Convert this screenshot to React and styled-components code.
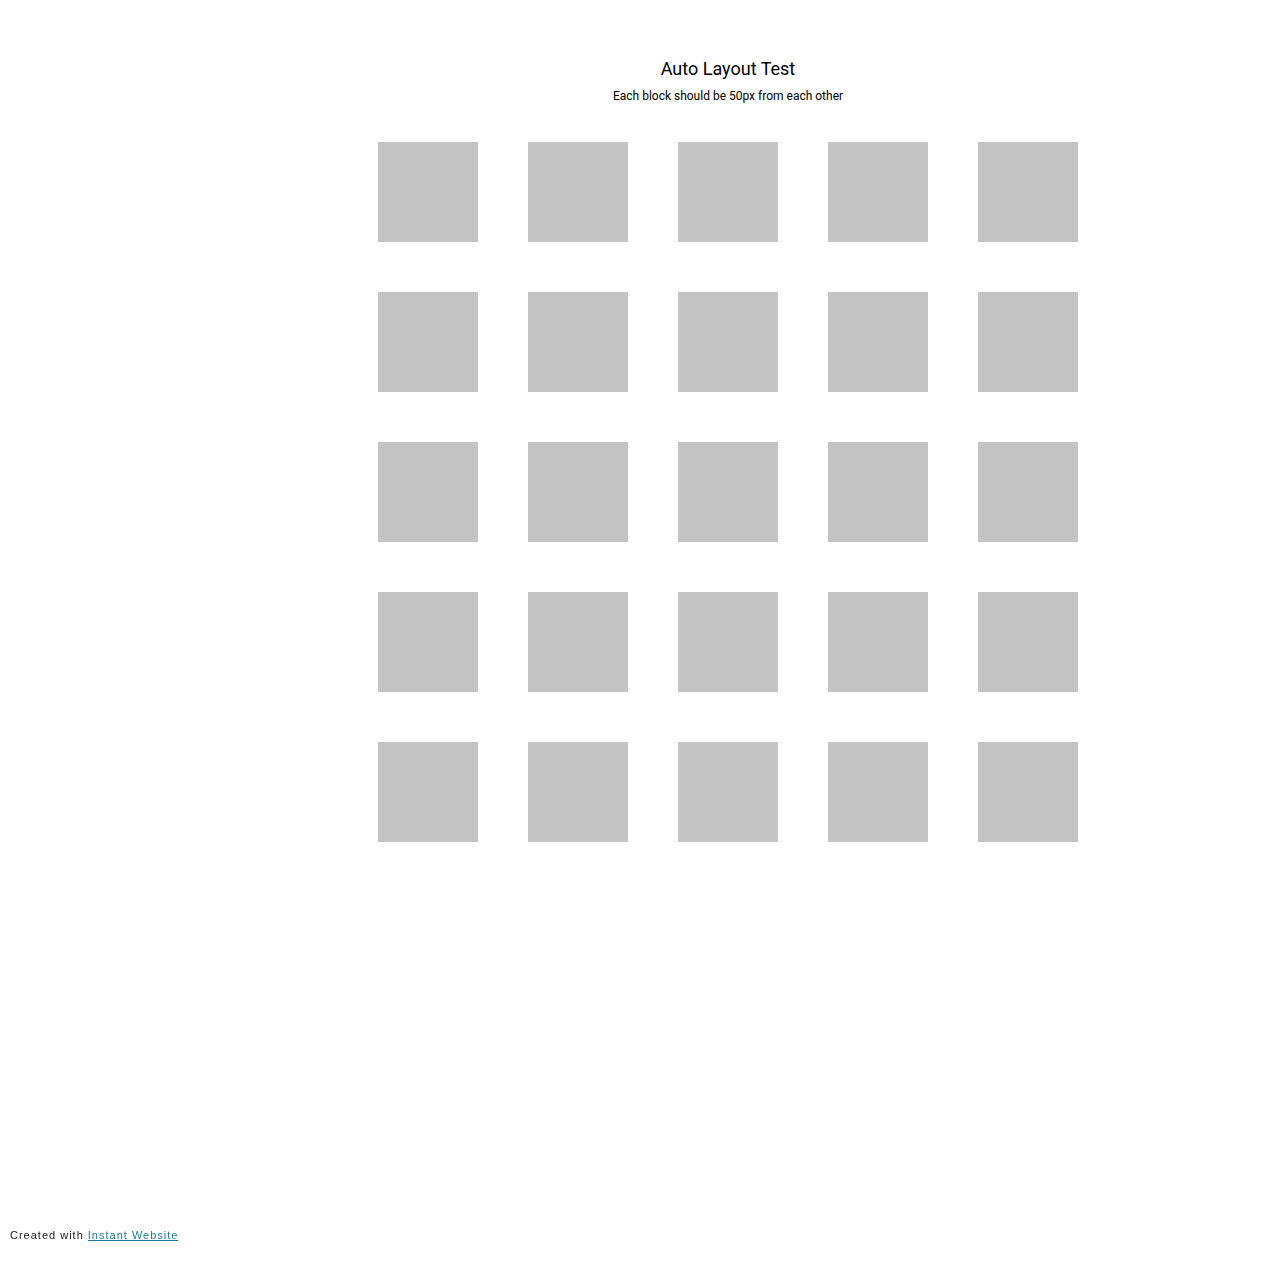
import React from "react";
import styled, { createGlobalStyle } from "styled-components";

const ROWS = 5;
const COLS = 5;

export default function App() {
  const blocks = Array.from({ length: ROWS * COLS }, (_, i) => i);
  return (
    <>
      <GlobalStyle />
      <Page>
        <Title>Auto Layout Test</Title>
        <Subtitle>Each block should be 50px from each other</Subtitle>
        <Grid>
          {blocks.map((i) => (
            <Block key={i} />
          ))}
        </Grid>
      </Page>
      <Credit>
        Created with <CreditLink href="#">Instant Website</CreditLink>
      </Credit>
    </>
  );
}

const GlobalStyle = createGlobalStyle`
  html {
    overflow-y: scroll;
  }
  body {
    margin: 0;
    background: #ffffff;
    font-family: Roboto, "Liberation Sans", sans-serif;
    color: #000000;
  }
`;

const Page = styled.main`
  width: 1456px;
  padding-top: 58px;
  display: flex;
  flex-direction: column;
  align-items: center;
`;

const Title = styled.h1`
  margin: 0;
  font-size: 18px;
  line-height: 22px;
  font-weight: 400;
`;

const Subtitle = styled.p`
  margin: 8px 0 0 0;
  font-size: 12px;
  line-height: 16px;
`;

const Grid = styled.div`
  margin-top: 38px;
  display: grid;
  grid-template-columns: repeat(${COLS}, 100px);
  gap: 50px;
`;

const Block = styled.div`
  width: 100px;
  height: 100px;
  background: #c4c4c4;
`;

const Credit = styled.footer`
  position: fixed;
  left: 10px;
  bottom: 24px;
  font-family: "Liberation Sans", Arial, sans-serif;
  font-size: 11px;
  line-height: 13px;
  letter-spacing: 1px;
  color: #222222;
`;

const CreditLink = styled.a`
  color: #1f7a93;
  text-decoration: underline;
`;
